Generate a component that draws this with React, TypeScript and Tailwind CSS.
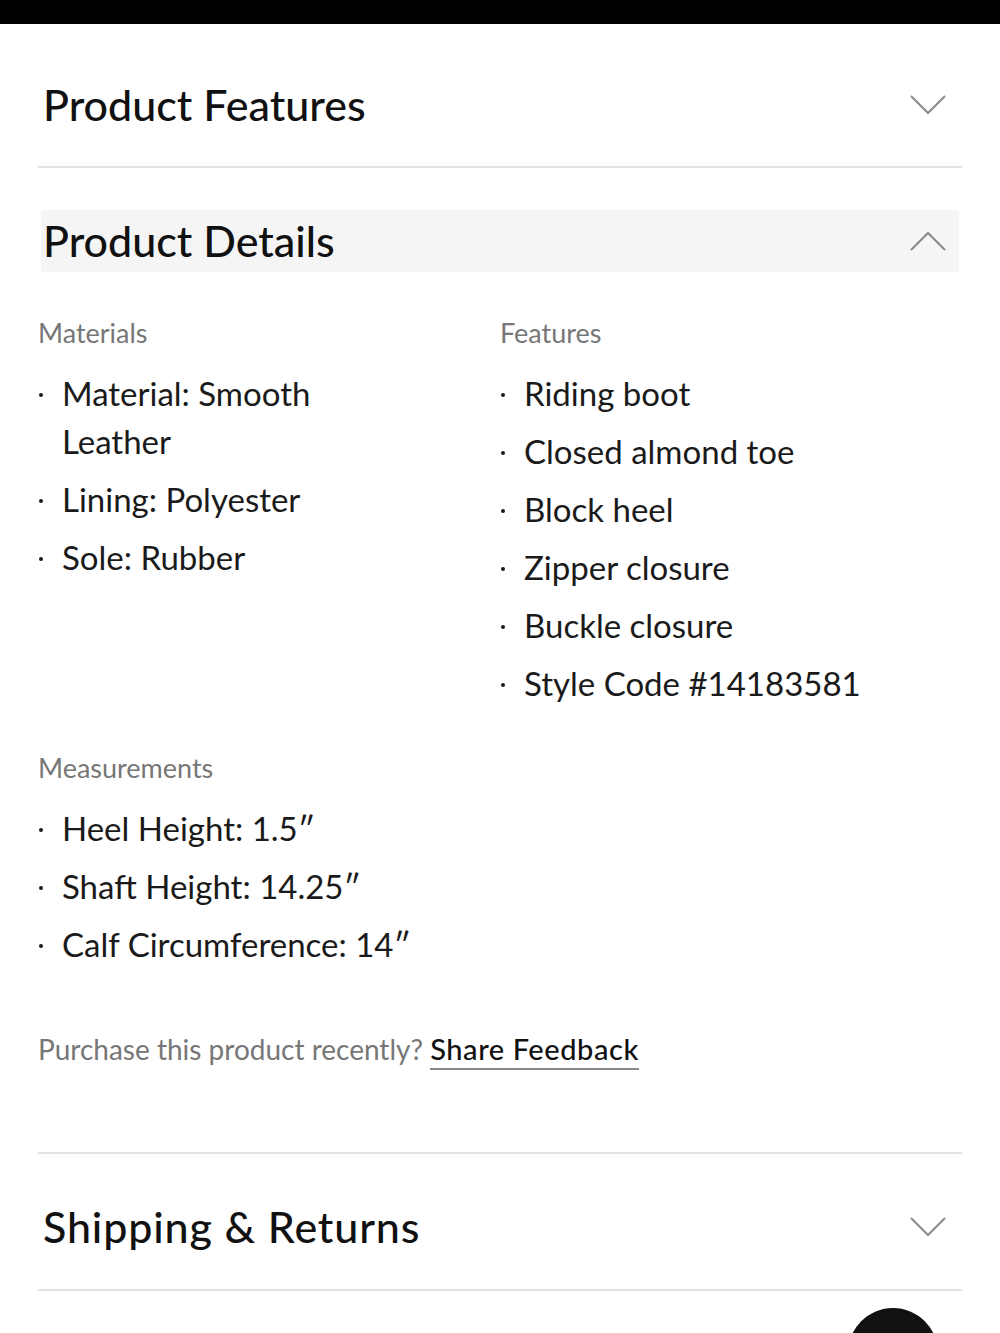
import React from "react";

const font = { fontFamily: "Lato, 'Noto Sans', sans-serif" };

function Chevron({ up }: { up?: boolean }) {
  return (
    <svg width="36" height="20" viewBox="0 0 36 20" fill="none" className="shrink-0">
      <polyline
        points={up ? "1,19 18,2 35,19" : "1,1 18,18 35,1"}
        stroke="#8a8a8a"
        strokeWidth="2"
      />
    </svg>
  );
}

function Item({ children }: { children: React.ReactNode }) {
  return (
    <li className="flex items-start text-[33px] leading-[48px] text-[#1a1a1a]">
      <span className="flex h-[48px] w-[24px] shrink-0 items-center pl-[1px]">
        <span className="mt-[3px] h-[4px] w-[4px] rounded-full bg-[#1a1a1a]" />
      </span>
      <span>{children}</span>
    </li>
  );
}

function Group({ label, items }: { label: string; items: React.ReactNode[] }) {
  return (
    <div>
      <div className="mb-[18px] text-[27px] leading-[36px] text-[#777]">{label}</div>
      <ul className="flex flex-col gap-[10px]">
        {items.map((it, i) => (
          <Item key={i}>{it}</Item>
        ))}
      </ul>
    </div>
  );
}

export default function App() {
  return (
    <div className="min-h-[1333px] overflow-hidden bg-white" style={font}>
      <div className="h-[24px] bg-black" />
      <div className="px-[38px]">
        {/* Product Features */}
        <div className="border-b-2 border-[#e3e3e3] pb-[30px] pt-[50px]">
          <div className="flex h-[62px] items-center justify-between pl-[5px] pr-[16px]">
            <h2 className="text-[43px] font-medium text-[#111]">Product Features</h2>
            <Chevron />
          </div>
        </div>

        {/* Product Details */}
        <div className="pt-[42px]">
          <div className="mx-[3px] flex h-[62px] items-center justify-between rounded-[2px] bg-[#f5f5f5] pl-[2px] pr-[13px]">
            <h2 className="text-[43px] font-medium text-[#111]">Product Details</h2>
            <Chevron up />
          </div>

          <div className="mt-[43px] grid grid-cols-2">
            <Group
              label="Materials"
              items={[
                <>
                  Material: Smooth
                  <br />
                  Leather
                </>,
                "Lining: Polyester",
                "Sole: Rubber",
              ]}
            />
            <Group
              label="Features"
              items={[
                "Riding boot",
                "Closed almond toe",
                "Block heel",
                "Zipper closure",
                "Buckle closure",
                "Style Code #14183581",
              ]}
            />
          </div>

          <div className="mt-[43px]">
            <Group
              label="Measurements"
              items={[
                "Heel Height: 1.5\u2033",
                "Shaft Height: 14.25\u2033",
                "Calf Circumference: 14\u2033",
              ]}
            />
          </div>

          <p className="mt-[63px] text-[28px] leading-[36px] text-[#777]">
            Purchase this product recently?{" "}
            <a className="border-b-2 border-[#888] pb-[2px] text-[29px] font-medium tracking-[0.02em] text-[#111]">
              Share Feedback
            </a>
          </p>
        </div>

        {/* Shipping */}
        <div className="mt-[85px] border-y-2 border-[#e3e3e3] pb-[31px] pt-[42px]">
          <div className="flex h-[62px] items-center justify-between pl-[5px] pr-[16px]">
            <h2 className="text-[43px] font-medium tracking-[0.02em] text-[#111]">
              Shipping &amp; Returns
            </h2>
            <Chevron />
          </div>
        </div>
      </div>

      <div className="relative">
        <div className="absolute left-[848px] top-[17px] h-[90px] w-[90px] rounded-full bg-[#111]" />
      </div>
    </div>
  );
}
